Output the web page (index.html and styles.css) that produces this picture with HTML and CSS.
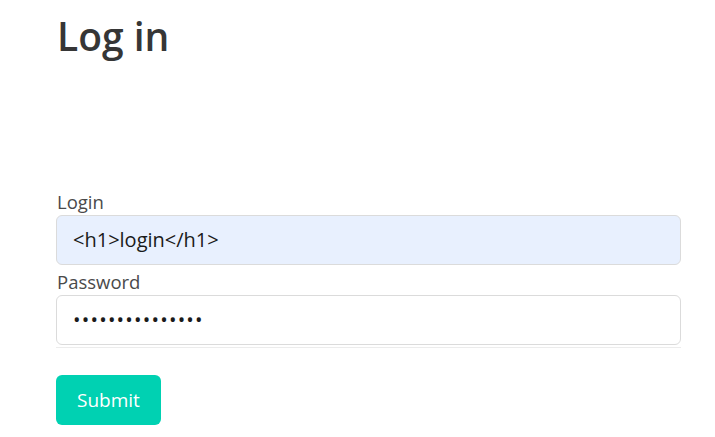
FILE: index.html
```html
<!DOCTYPE html>
<html>
<head>
<meta charset="utf-8">
<link rel="stylesheet" href="styles.css">
</head>
<body>
<main class="page">
  <h1 class="title">Log in</h1>
  <form class="form">
    <div class="field">
      <label class="label">Login</label>
      <div class="control">
        <input class="input autofill" type="text" value="<h1>login</h1>">
      </div>
    </div>
    <div class="field">
      <label class="label">Password</label>
      <div class="control">
        <input class="input secret" type="password" value="passwordpasswor">
      </div>
      <div class="rule"></div>
    </div>
    <div class="actions">
      <button class="button" type="button">Submit</button>
    </div>
  </form>
</main>
</body>
</html>
```

FILE: styles.css
```css
html, body {
  margin: 0;
  padding: 0;
  background: #fff;
}
body {
  font-family: "Open Sans", "Noto Sans", sans-serif;
  color: #4a4a4a;
}
.page {
  padding: 14px 34px 0 56px;
}
.title {
  margin: 0;
  font-size: 39px;
  font-weight: 600;
  line-height: 1.125;
  color: #363636;
  padding-left: 1px;
}
.form {
  margin-top: 127px;
}
.field {
  display: flex;
  flex-direction: column;
}
.label {
  font-size: 18.5px;
  line-height: 26px;
  padding-top: 4px;
  color: #4a4a4a;
  padding-left: 1px;
}
.control {
  display: flex;
}
.input {
  box-sizing: border-box;
  width: 100%;
  height: 50px;
  border: 1px solid #dbdbdb;
  border-radius: 6px;
  padding: 0 16px;
  font-family: "Open Sans", "Noto Sans", sans-serif;
  font-size: 20px;
  color: #1a1a1a;
  background: #fff;
  outline: none;
}
.input.autofill {
  background: #e8f0fe;
}
.input.secret {
  letter-spacing: 1.2px;
}
.rule {
  height: 1px;
  background: #ececec;
  margin-top: 2px;
}
.actions {
  margin-top: 27px;
}
.button {
  height: 50px;
  padding: 0 21px;
  border: none;
  border-radius: 6px;
  background: #00d1b2;
  color: #fff;
  font-family: "Open Sans", "Noto Sans", sans-serif;
  font-size: 19px;
}
```
